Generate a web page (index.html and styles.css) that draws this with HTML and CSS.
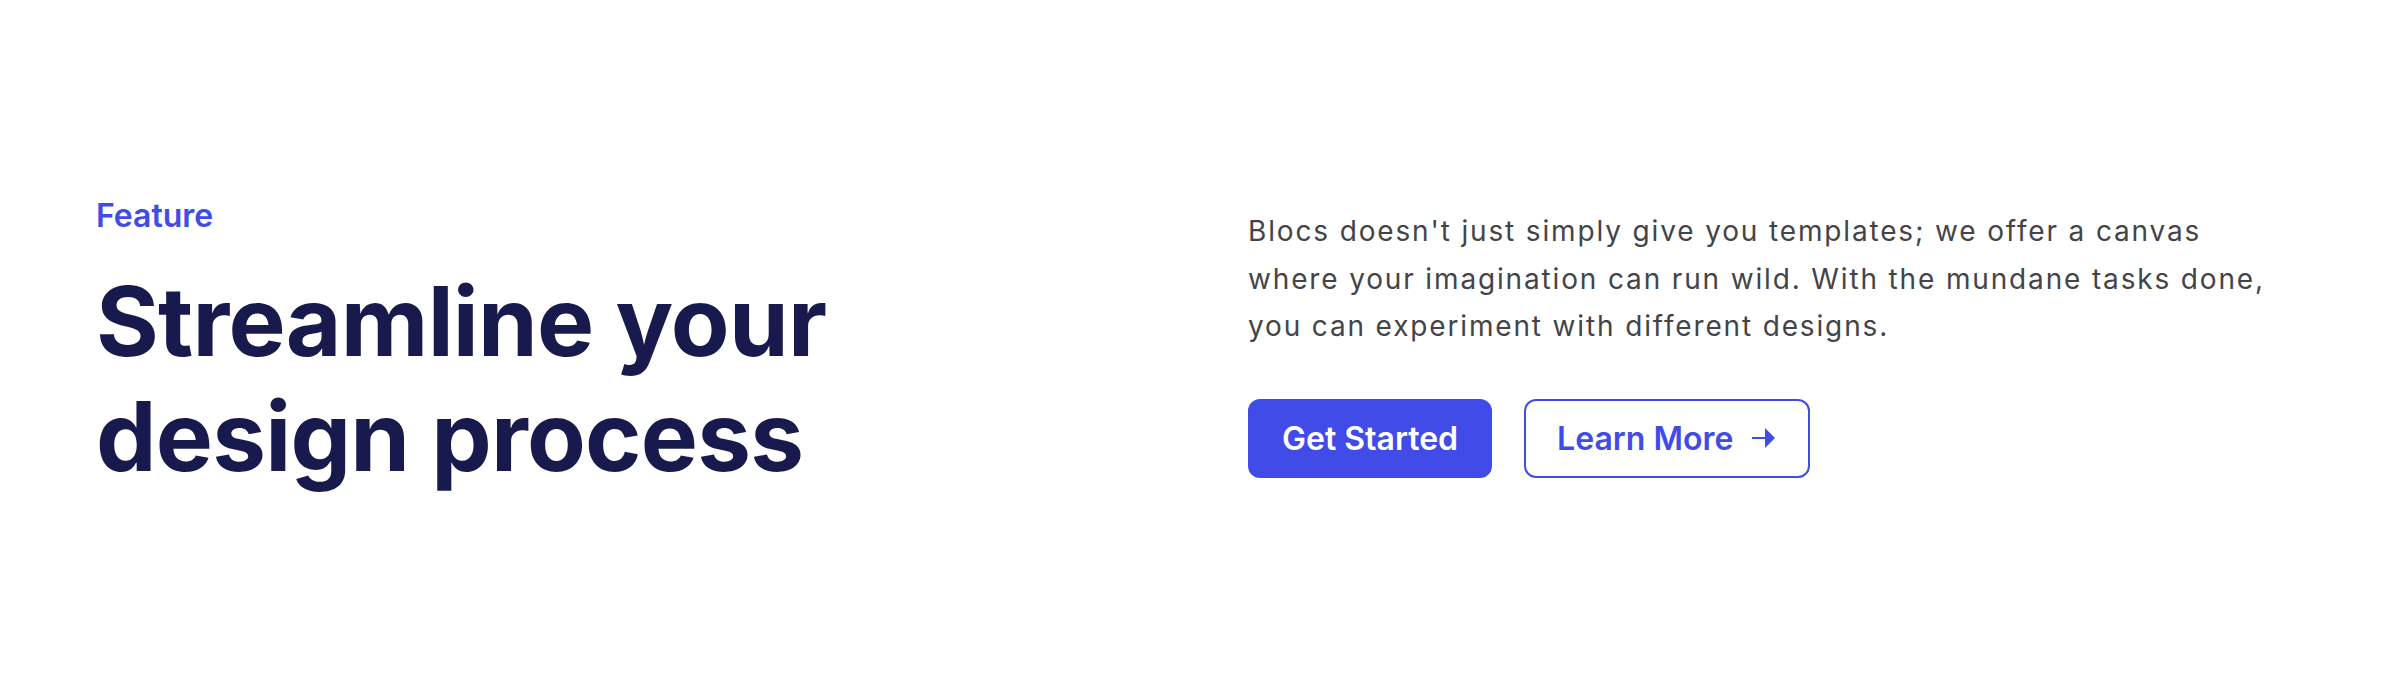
FILE: index.html
```html
<!DOCTYPE html>
<html lang="en">
<head>
<meta charset="utf-8">
<title>Feature</title>
<link rel="stylesheet" href="styles.css">
</head>
<body>
<section class="hero">
  <div class="hero-left">
    <p class="eyebrow">Feature</p>
    <h1 class="title">Streamline your<br>design process</h1>
  </div>
  <div class="hero-right">
    <p class="lead">Blocs doesn't just simply give you templates; we offer a canvas where your imagination can run wild. With the mundane tasks done, you can experiment with different designs.</p>
    <div class="actions">
      <a class="btn btn-primary" href="#">Get Started</a>
      <a class="btn btn-outline" href="#">Learn More
        <svg class="arrow" width="24" height="20" viewBox="0 0 24 20" aria-hidden="true">
          <rect x="0" y="9" width="14" height="2" fill="currentColor"/>
          <polygon points="13,0 23,10 13,20" fill="currentColor"/>
        </svg>
      </a>
    </div>
  </div>
</section>
</body>
</html>
```

FILE: styles.css
```css
* { box-sizing: border-box; }
html, body { margin: 0; padding: 0; background: #ffffff; }
body {
  font-family: Inter, "Noto Sans", "Liberation Sans", sans-serif;
  -webkit-font-smoothing: antialiased;
}
.hero {
  min-height: 686px;
  padding: 0 96px;
  display: grid;
  grid-template-columns: 1fr 1fr;
  column-gap: 96px;
  align-items: center;
}
.eyebrow {
  margin: 0 0 24px;
  font-size: 32px;
  line-height: 48px;
  font-weight: 600;
  color: #414ce8;
}
.title {
  margin: 0;
  font-size: 96px;
  line-height: 1.2;
  font-weight: 700;
  color: #181a4d;
  letter-spacing: -0.008em;
}
.lead {
  max-width: 1036px;
  margin: 0 0 48px;
  font-size: 28px;
  line-height: 47.5px;
  font-weight: 400;
  letter-spacing: 1.85px;
  color: #444448;
}
.actions {
  display: flex;
  gap: 32px;
}
.btn {
  display: inline-flex;
  align-items: center;
  height: 79px;
  padding: 0 32px;
  border: 2px solid #414ce8;
  border-radius: 12px;
  font-size: 32px;
  line-height: 39px;
  font-weight: 600;
  text-decoration: none;
}
.btn-primary {
  background: #414ce8;
  color: #ffffff;
}
.btn-outline {
  background: #ffffff;
  color: #414ce8;
  padding: 0 32px 0 31px;
  gap: 19px;
}
.arrow { display: block; }
```
